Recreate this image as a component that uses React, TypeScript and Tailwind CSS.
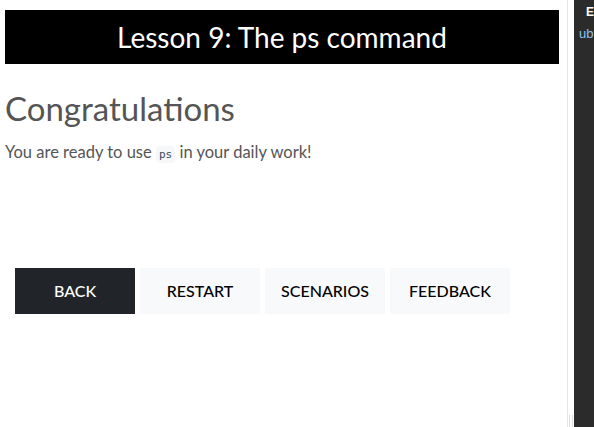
const buttons = ['RESTART', 'SCENARIOS', 'FEEDBACK']

const App = () => {
  return (
    <div className="flex h-[427px] w-[594px] overflow-hidden bg-white font-['Lato',sans-serif]">
      <main className="w-[568px] shrink-0 border-r border-[#e5e5e5] pl-[5px] pr-[8px]">
        <div className="mt-[10px] flex h-[54px] items-center justify-center bg-black">
          <h1 className="text-[28px] text-white">Lesson 9: The ps command</h1>
        </div>
        <h2 className="mt-[25px] text-[33px] leading-[38px] text-[#555]">Congratulations</h2>
        <p className="mt-[13px] text-[16.5px] text-[#555]">
          You are ready to use{' '}
          <code className="rounded bg-[#f6f7f8] px-[3px] py-[2px] font-['DejaVu_Sans_Mono',monospace] text-[11px] text-[#3c4a5c]">
            ps
          </code>{' '}
          in your daily work!
        </p>
        <div className="ml-[10px] mt-[103px] flex gap-[5px]">
          <button className="h-[46px] w-[120px] bg-[#212529] text-[16px] font-medium text-white">BACK</button>
          {buttons.map((b) => (
            <button key={b} className="h-[46px] w-[120px] bg-[#f8f9fa] text-[16px] font-medium text-black">
              {b}
            </button>
          ))}
        </div>
      </main>
      <div className="relative w-[6px] shrink-0">
        <div className="absolute bottom-0 left-[1px] h-[12px] w-[1px] bg-[#ddd]" />
        <div className="absolute bottom-0 left-[4px] h-[12px] w-[1px] bg-[#ddd]" />
      </div>
      <aside className="flex-1 overflow-hidden bg-[#2b2b2b] font-['Liberation_Sans',sans-serif] text-[12px]">
        <div className="pl-[12px] pt-[3px] font-bold text-white">E</div>
        <div className="pl-[5px] pt-[3px] text-[13px] text-[#8ec3ea]">ub</div>
      </aside>
    </div>
  )
}

export default App
